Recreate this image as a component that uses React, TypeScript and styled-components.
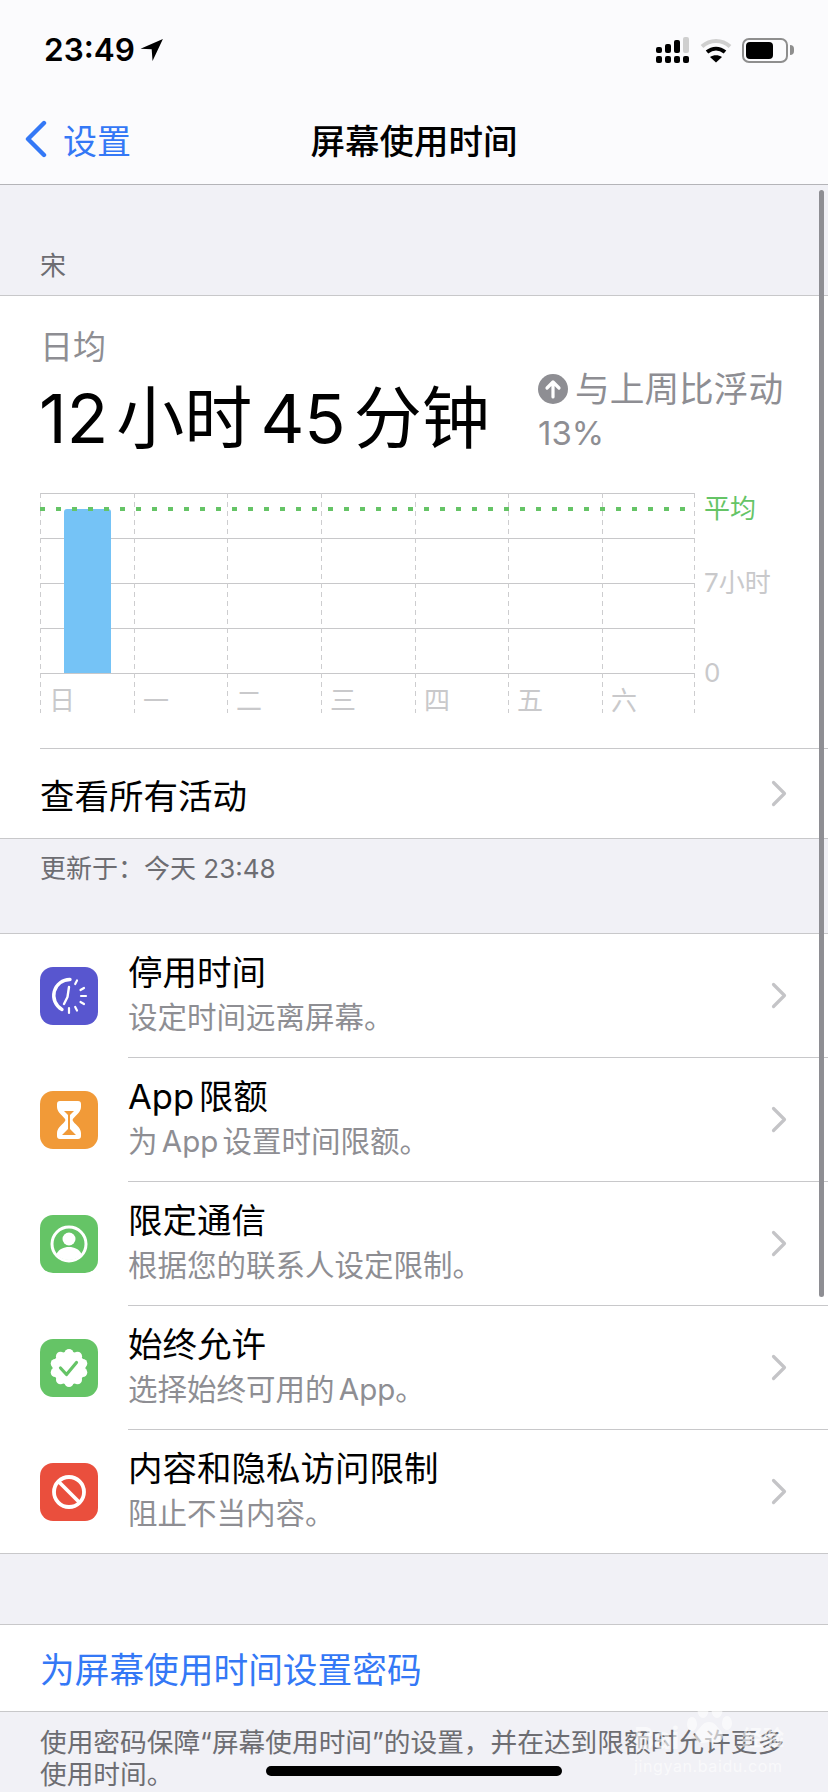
import React from 'react'
import styled, { createGlobalStyle } from 'styled-components'

const GlobalStyle = createGlobalStyle`
  html, body {
    margin: 0;
    padding: 0;
    background: #f1f1f6;
  }
  * {
    box-sizing: border-box;
  }
`

const font = `Inter, "Noto Sans CJK SC", sans-serif`

const DAYS = ['日', '一', '二', '三', '四', '五', '六']
const COLUMNS = [0, 94, 187, 281, 375, 468, 562, 654]
const GRID_LINES = [0, 45, 90, 135, 180]
const BADGE_LOBES = [0, 36, 72, 108, 144, 180, 216, 252, 288, 324]

const UPDATED_TEXT = '更新于\uFF1A今天 23:48'
const FOOTNOTE_TEXT = '使用密码保障“屏幕使用时间”的设置\uFF0C并在达到限额时允许更多使用时间。'

const DowntimeIcon = () => (
  <svg width="58" height="58" viewBox="0 0 58 58" fill="none" stroke="#fff" strokeLinecap="round">
    <path d="M30 12.500a16 16 0 0 0-8 30" strokeWidth="3.400" />
    <path d="M29 20l-1.500 10-3.500 7" strokeWidth="2.400" />
    <g strokeWidth="2.200">
      <path d="M37 13.500l-1.800 3.500" />
      <path d="M44 21l-3.500 2" />
      <path d="M46 29h-5" />
      <path d="M44 37l-3.500-2" />
      <path d="M37 43.500l-1.800-3.500" />
      <path d="M29 46v-5" />
    </g>
  </svg>
)

const HourglassIcon = () => (
  <svg width="58" height="58" viewBox="0 0 58 58">
    <path
      d="M20 10h18a3 3 0 0 1 3 3v3c0 6-7 9-8.500 13 1.500 4 8.500 7 8.500 13v3a3 3 0 0 1-3 3H20a3 3 0 0 1-3-3v-3c0-6 7-9 8.500-13-1.500-4-8.500-7-8.500-13v-3a3 3 0 0 1 3-3z"
      fill="#fff"
    />
    <path d="M24 20h10l-4 4v14l6 6H22l6-6V24z" fill="#f19a38" />
  </svg>
)

const PersonIcon = () => (
  <svg width="58" height="58" viewBox="0 0 58 58" fill="none">
    <circle cx="29" cy="29" r="17" stroke="#fff" strokeWidth="3" />
    <circle cx="29" cy="24" r="6.500" fill="#fff" />
    <path d="M16.500 39c2.500-5 7-7 12.500-7s10 2 12.500 7c-3 4-7.500 6-12.500 6s-9.500-2-12.500-6z" fill="#fff" />
  </svg>
)

const BadgeIcon = () => (
  <svg width="58" height="58" viewBox="0 0 58 58" fill="none">
    <circle cx="29" cy="29" r="16.500" fill="#fff" />
    {BADGE_LOBES.map(a => (
      <circle
        key={a}
        cx={29 + 14.5 * Math.cos(((a - 90) * Math.PI) / 180)}
        cy={29 + 14.5 * Math.sin(((a - 90) * Math.PI) / 180)}
        r="4.500"
        fill="#fff"
      />
    ))}
    <path d="M20.500 29l6 6.500 10-12" stroke="#65c466" strokeWidth="3.200" strokeLinecap="round" strokeLinejoin="round" />
  </svg>
)

const BanIcon = () => (
  <svg width="58" height="58" viewBox="0 0 58 58" fill="none" stroke="#fff" strokeWidth="3.800">
    <circle cx="29" cy="29" r="15" />
    <path d="M18.500 18.500l21 21" />
  </svg>
)

const Chevron = () => (
  <ChevronSvg width="16" height="27" viewBox="0 0 16 27" fill="none">
    <path d="M2.500 2.500l11 11-11 11" stroke="#c4c4c7" strokeWidth="3.200" strokeLinecap="round" strokeLinejoin="round" />
  </ChevronSvg>
)

const FEATURES = [
  { title: '停用时间', sub: '设定时间远离屏幕。', color: '#5856cf', icon: <DowntimeIcon /> },
  { title: 'App 限额', sub: '为 App 设置时间限额。', color: '#f19a38', icon: <HourglassIcon /> },
  { title: '限定通信', sub: '根据您的联系人设定限制。', color: '#65c466', icon: <PersonIcon /> },
  { title: '始终允许', sub: '选择始终可用的 App。', color: '#65c466', icon: <BadgeIcon /> },
  { title: '内容和隐私访问限制', sub: '阻止不当内容。', color: '#ea4f3d', icon: <BanIcon /> },
]

export default function App() {
  return (
    <Screen>
      <GlobalStyle />
      <TopBar>
        <StatusBar>
          <Clock>
            23:49
            <svg width="24" height="24" viewBox="0 0 22 22">
              <path d="M21 1L0.500 9.800l10.200.500.800 10.700z" fill="#000" />
            </svg>
          </Clock>
          <StatusIcons>
            <svg width="34" height="27" viewBox="0 0 34 27">
              <rect x="0" y="10" width="6" height="6" rx="2" />
              <rect x="9" y="7" width="6" height="9" rx="2" />
              <rect x="18" y="3" width="6" height="13" rx="2" />
              <rect x="27" y="0" width="6" height="16" rx="2" fill="#cfcfcf" />
              <rect x="0" y="19" width="6" height="7" rx="2" />
              <rect x="9" y="19" width="6" height="7" rx="2" />
              <rect x="18" y="19" width="6" height="7" rx="2" />
              <rect x="27" y="19" width="6" height="7" rx="2" />
            </svg>
            <svg width="32" height="25" viewBox="0 0 32 25" fill="none">
              <path d="M2 8.500c8-7.500 20-7.500 28 0" stroke="#cfcfcf" strokeWidth="4" />
              <path d="M7 14c5.500-4.500 12.500-4.500 18 0" stroke="#000" strokeWidth="4" />
              <path d="M16 24.500l-6-5.500c3.500-2.500 8.500-2.500 12 0z" fill="#000" />
            </svg>
            <Battery>
              <BatteryFill />
              <BatteryNub />
            </Battery>
          </StatusIcons>
        </StatusBar>
        <NavBar>
          <BackLink>
            <svg width="24" height="38" viewBox="0 0 24 38" fill="none">
              <path d="M20 3L4 19l16 16" stroke="#3478f6" strokeWidth="4.400" strokeLinecap="round" strokeLinejoin="round" />
            </svg>
            设置
          </BackLink>
          <NavTitle>屏幕使用时间</NavTitle>
        </NavBar>
      </TopBar>

      <SectionLabel>宋</SectionLabel>

      <Card>
        <Summary>
          <Caption>日均</Caption>
          <SummaryRow>
            <BigTime>12 小时 45 分钟</BigTime>
            <Trend>
              <TrendLine>
                <svg width="30" height="30" viewBox="0 0 30 30" fill="none">
                  <circle cx="15" cy="15" r="15" fill="#8e8e93" />
                  <path d="M15 23V8M9 14l6-6 6 6" stroke="#fff" strokeWidth="3.200" strokeLinecap="round" strokeLinejoin="round" />
                </svg>
                与上周比浮动
              </TrendLine>
              <TrendPercent>13%</TrendPercent>
            </Trend>
          </SummaryRow>
          <ChartSvg width="748" height="228" viewBox="0 0 748 228">
            {GRID_LINES.map(y => (
              <line key={y} x1="0" x2="654" y1={y + 0.5} y2={y + 0.5} stroke="#c8c8ca" strokeWidth="1" />
            ))}
            {COLUMNS.map(x => (
              <line key={x} x1={x + 0.5} x2={x + 0.5} y1="0" y2="220" stroke="#cdcdcf" strokeWidth="1" strokeDasharray="5 4" />
            ))}
            <path d="M24 180V19a3 3 0 0 1 3-3h41a3 3 0 0 1 3 3v161z" fill="#75c3f6" />
            <line x1="0" x2="648" y1="16" y2="16" stroke="#65c466" strokeWidth="4" strokeDasharray="5 11" />
            <ChartText x="664" y="25" fill="#65c466">平均</ChartText>
            <ChartText x="664" y="99" fill="#c9c9cb">7小时</ChartText>
            <ChartText x="664" y="189" fill="#c9c9cb">0</ChartText>
            {DAYS.map((day, i) => (
              <ChartText key={day} x={COLUMNS[i] + 9} y="217" fill="#c9c9cb">
                {day}
              </ChartText>
            ))}
          </ChartSvg>
        </Summary>
        <ActivityRow>
          <ActivityLabel>查看所有活动</ActivityLabel>
          <Chevron />
        </ActivityRow>
      </Card>

      <UpdatedNote>{UPDATED_TEXT}</UpdatedNote>

      <FeatureList>
        {FEATURES.map((f, i) => (
          <FeatureRow key={f.title} $last={i === FEATURES.length - 1}>
            <IconTile $color={f.color}>{f.icon}</IconTile>
            <FeatureBody $last={i === FEATURES.length - 1}>
              <FeatureText>
                <FeatureTitle>{f.title}</FeatureTitle>
                <FeatureSub>{f.sub}</FeatureSub>
              </FeatureText>
              <Chevron />
            </FeatureBody>
          </FeatureRow>
        ))}
      </FeatureList>

      <PasscodeRow>为屏幕使用时间设置密码</PasscodeRow>
      <Footnote>{FOOTNOTE_TEXT}</Footnote>

      <ScrollThumb />
      <HomeIndicator />
      <Watermark>
        <svg width="46" height="44" viewBox="0 0 46 44" fill="#fff">
          <ellipse cx="6" cy="22" rx="5" ry="7" />
          <ellipse cx="17" cy="8" rx="5.500" ry="8" />
          <ellipse cx="31" cy="8" rx="5.500" ry="8" />
          <ellipse cx="41" cy="21" rx="5" ry="7" />
          <path d="M23 20c6 0 8 5 12 9 4 5 1 12-5 12-3 0-5-1-7-1s-4 1-7 1c-6 0-9-7-5-12 4-4 6-9 12-9z" />
        </svg>
        <WatermarkBrand>
          <WatermarkLatin>Bai</WatermarkLatin>
          <WatermarkHan>经验</WatermarkHan>
        </WatermarkBrand>
        <WatermarkUrl>jingyan.baidu.com</WatermarkUrl>
      </Watermark>
    </Screen>
  )
}

const Screen = styled.div`
  position: relative;
  width: 828px;
  height: 1792px;
  overflow: hidden;
  background: #f1f1f6;
  font-family: ${font};
  color: #000;
`

const TopBar = styled.header`
  height: 185px;
  background: #fbfbfd;
  border-bottom: 1px solid #b4b4b8;
`

const StatusBar = styled.div`
  display: flex;
  justify-content: space-between;
  align-items: center;
  height: 100px;
  padding: 0 40px 0 44px;
`

const Clock = styled.div`
  display: flex;
  align-items: center;
  gap: 5px;
  font-size: 31.500px;
  font-weight: 600;
  line-height: 1;
`

const StatusIcons = styled.div`
  display: flex;
  align-items: center;
  gap: 10px;
`

const Battery = styled.div`
  position: relative;
  width: 46px;
  height: 25px;
  border: 2px solid #8e8e8e;
  border-radius: 7px;
  padding: 2px;
`

const BatteryFill = styled.div`
  width: 27px;
  height: 17px;
  background: #000;
  border-radius: 4px;
`

const BatteryNub = styled.div`
  position: absolute;
  top: 5px;
  right: -8px;
  width: 4px;
  height: 10px;
  background: #8e8e8e;
  border-radius: 0 4px 4px 0;
`

const NavBar = styled.nav`
  position: relative;
  display: flex;
  align-items: center;
  justify-content: center;
  height: 84px;
  padding-bottom: 6px;
`

const BackLink = styled.div`
  position: absolute;
  left: 24px;
  top: 1px;
  display: flex;
  align-items: center;
  gap: 15px;
  height: 76px;
  color: #3478f6;
  font-size: 34px;
`

const NavTitle = styled.h1`
  margin: 0;
  font-size: 34.500px;
  font-weight: 500;
`

const SectionLabel = styled.div`
  display: flex;
  align-items: flex-end;
  height: 110px;
  padding: 0 0 9px 40px;
  color: #6d6d72;
  font-size: 26px;
  line-height: 40px;
`

const Card = styled.section`
  background: #fff;
  border-top: 1px solid #c8c8ca;
  border-bottom: 1px solid #c8c8ca;
`

const Summary = styled.div`
  padding: 28px 0 0 40px;
`

const Caption = styled.div`
  color: #8e8e93;
  font-size: 33px;
  line-height: 46px;
`

const SummaryRow = styled.div`
  display: flex;
  align-items: flex-start;
  height: 123px;
`

const BigTime = styled.div`
  width: 499px;
  margin-left: -1px;
  font-size: 68px;
  line-height: 96px;
  word-spacing: -11px;
  white-space: nowrap;
`

const Trend = styled.div`
  display: flex;
  flex-direction: column;
  margin-top: -3px;
  color: #8e8e93;
`

const TrendLine = styled.div`
  display: flex;
  align-items: center;
  gap: 7px;
  font-size: 34.700px;
  line-height: 44px;
`

const TrendPercent = styled.div`
  font-size: 33px;
  line-height: 45px;
`

const ChartSvg = styled.svg`
  display: block;
`

const ChartText = styled.text`
  font-family: ${font};
  font-size: 26px;
`

const ActivityRow = styled.div`
  display: flex;
  align-items: center;
  justify-content: space-between;
  height: 90px;
  margin: 27px 0 0 40px;
  padding-right: 41px;
  border-top: 1px solid #c8c8ca;
`

const ActivityLabel = styled.div`
  font-size: 34.500px;
`

const ChevronSvg = styled.svg`
  flex: none;
`

const UpdatedNote = styled.div`
  height: 94px;
  padding: 10px 0 0 40px;
  color: #6d6d72;
  font-size: 26px;
  line-height: 40px;
`

const FeatureList = styled.section`
  background: #fff;
  border-top: 1px solid #c8c8ca;
  border-bottom: 1px solid #c8c8ca;
`

const FeatureRow = styled.div<{ $last: boolean }>`
  display: flex;
  align-items: center;
  height: ${p => (p.$last ? 123 : 124)}px;
  padding-left: 40px;
`

const IconTile = styled.div<{ $color: string }>`
  flex: none;
  width: 58px;
  height: 58px;
  margin-right: 30px;
  border-radius: 13px;
  background: ${p => p.$color};
  svg {
    display: block;
  }
`

const FeatureBody = styled.div<{ $last: boolean }>`
  flex: 1;
  display: flex;
  align-items: center;
  justify-content: space-between;
  align-self: stretch;
  padding-right: 41px;
  border-bottom: ${p => (p.$last ? 'none' : '1px solid #c8c8ca')};
`

const FeatureText = styled.div`
  display: flex;
  flex-direction: column;
  padding-bottom: 2px;
`

const FeatureTitle = styled.div`
  font-size: 34.500px;
  line-height: 45px;
  word-spacing: -5px;
`

const FeatureSub = styled.div`
  color: #8e8e93;
  font-size: 29.500px;
  line-height: 45px;
  word-spacing: -4px;
`

const PasscodeRow = styled.div`
  display: flex;
  align-items: center;
  height: 88px;
  margin-top: 70px;
  padding-left: 40px;
  background: #fff;
  border-top: 1px solid #c8c8ca;
  border-bottom: 1px solid #c8c8ca;
  color: #3478f6;
  font-size: 34.700px;
`

const Footnote = styled.p`
  margin: 14px 0 0;
  padding: 0 30px 0 40px;
  color: #6d6d72;
  font-size: 26.700px;
  line-height: 32px;
`

const ScrollThumb = styled.div`
  position: absolute;
  top: 190px;
  right: 4px;
  width: 5px;
  height: 1107px;
  border-radius: 3px;
  background: #8e8e93;
`

const HomeIndicator = styled.div`
  position: absolute;
  left: 266px;
  top: 1766px;
  width: 296px;
  height: 10px;
  border-radius: 5px;
  background: #000;
`

const Watermark = styled.div`
  position: absolute;
  left: 634px;
  top: 1702px;
  width: 150px;
  color: #fff;
  opacity: 0.6;
  svg {
    display: block;
    margin-left: 52px;
  }
`

const WatermarkBrand = styled.div`
  display: flex;
  justify-content: space-between;
  align-items: flex-end;
  margin-top: -21px;
  font-weight: 700;
  white-space: nowrap;
`

const WatermarkLatin = styled.span`
  font-size: 30px;
  line-height: 26px;
`

const WatermarkHan = styled.span`
  font-size: 21px;
  line-height: 26px;
`

const WatermarkUrl = styled.div`
  margin-top: 6px;
  font-size: 16px;
  line-height: 18px;
  letter-spacing: 0.6px;
  white-space: nowrap;
`
